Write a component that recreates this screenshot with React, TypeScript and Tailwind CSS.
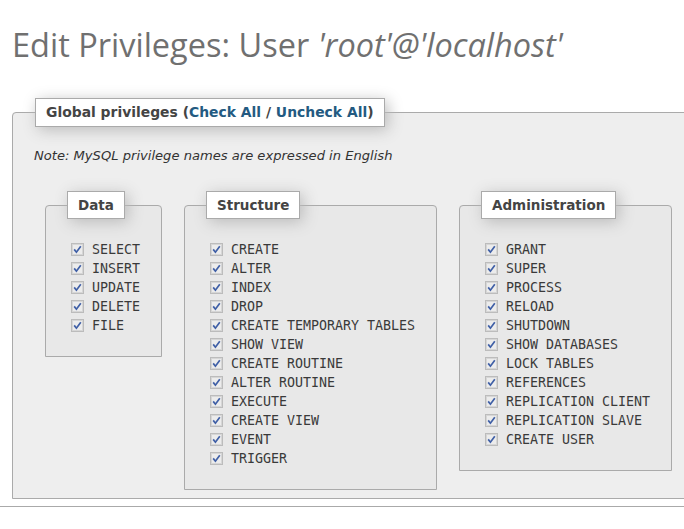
import React from 'react';

const data = ['SELECT', 'INSERT', 'UPDATE', 'DELETE', 'FILE'];
const structure = [
  'CREATE', 'ALTER', 'INDEX', 'DROP', 'CREATE TEMPORARY TABLES', 'SHOW VIEW',
  'CREATE ROUTINE', 'ALTER ROUTINE', 'EXECUTE', 'CREATE VIEW', 'EVENT', 'TRIGGER',
];
const admin = [
  'GRANT', 'SUPER', 'PROCESS', 'RELOAD', 'SHUTDOWN', 'SHOW DATABASES', 'LOCK TABLES',
  'REFERENCES', 'REPLICATION CLIENT', 'REPLICATION SLAVE', 'CREATE USER',
];

function Check() {
  return (
    <svg width="13" height="13" viewBox="0 0 13 13" className="shrink-0">
      <rect x="0.5" y="0.5" width="12" height="12" fill="#f1f1f1" stroke="#8a8a8a" strokeDasharray="1 1" />
      <rect x="1.5" y="1.5" width="10" height="10" fill="#ececec" stroke="#d6d6d6" />
      <path d="M3.2 6.4 L5.4 9.2 L9.8 3.2" fill="none" stroke="#3f5fa6" strokeWidth="1.7" />
    </svg>
  );
}

function Group({ title, items, width }: { title: string; items: string[]; width: string }) {
  return (
    <fieldset
      className={`${width} shrink-0 border border-[#aaa] rounded-t-[4px] bg-[#e8e8e8] pl-[25px] pr-[10px] pt-[21px] pb-[21px]`}
    >
      <legend
        className="ml-[-4px] px-[10px] h-[28px] leading-[26px] border border-[#aaa] bg-white text-[#444] font-bold text-[13.5px] shadow-[3px_3px_15px_#bbb]"
        style={{ fontFamily: '"DejaVu Sans", Verdana, sans-serif' }}
      >
        {title}
      </legend>
      <div className="flex flex-col">
        {items.map((it) => (
          <div key={it} className="flex items-center h-[19px] gap-[8px]">
            <Check />
            <span
              className="text-[13.3px] text-[#3a3a3a] whitespace-nowrap"
              style={{ fontFamily: '"DejaVu Sans Mono", "Liberation Mono", monospace' }}
            >
              {it}
            </span>
          </div>
        ))}
      </div>
    </fieldset>
  );
}

export default function App() {
  return (
    <div className="w-[684px] h-[529px] overflow-hidden bg-white relative">
      <h2
        className="pl-[12px] pt-[25px] text-[32.5px] leading-[40px] text-[#707070] font-normal whitespace-nowrap"
        style={{ fontFamily: '"Open Sans", "Noto Sans", sans-serif' }}
      >
        Edit Privileges: User <i>'root'@'localhost'</i>
      </h2>
      <fieldset className="ml-[12px] mt-[33px] w-[720px] border border-[#aaa] rounded-tl-[4px] bg-[#eee] pl-[21px] pt-[21px] pb-[8px]">
        <legend
          className="ml-px px-[10px] h-[29px] leading-[27px] border border-[#aaa] bg-white text-[#444] font-bold text-[13.9px] shadow-[3px_3px_15px_#bbb] whitespace-nowrap"
          style={{ fontFamily: '"DejaVu Sans", Verdana, sans-serif' }}
        >
          Global privileges (<span className="text-[#235a81]">Check All</span> /{' '}
          <span className="text-[#235a81]">Uncheck All</span>)
        </legend>
        <p
          className="italic text-[13.1px] leading-[16px] text-[#333] whitespace-nowrap"
          style={{ fontFamily: '"DejaVu Sans", Verdana, sans-serif' }}
        >
          Note: MySQL privilege names are expressed in English
        </p>
        <div className="flex items-start mt-[27px] ml-[11px] gap-[22px]">
          <Group title="Data" items={data} width="w-[117px]" />
          <Group title="Structure" items={structure} width="w-[253px]" />
          <Group title="Administration" items={admin} width="w-[213px]" />
        </div>
      </fieldset>
      <div className="mt-[7px] h-px bg-[#aaa] w-full" />
    </div>
  );
}
